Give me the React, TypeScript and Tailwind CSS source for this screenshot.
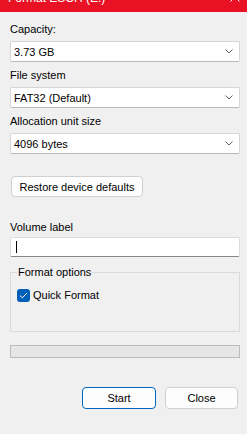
import React from "react";

const FONT = { fontFamily: '"Liberation Sans", Arial, sans-serif' };

function Chevron() {
  return (
    <svg width="8" height="5" viewBox="0 0 8 5" className="shrink-0">
      <path d="M0.5 0.5 L4 4 L7.5 0.5" fill="none" stroke="#5f5f5f" strokeWidth="1" />
    </svg>
  );
}

function Combo({ value }: { value: string }) {
  return (
    <div className="flex h-[21px] items-center justify-between rounded-[2px] border border-[#d6d6d6] border-b-[#b8b8b8] bg-white pl-[3px] pr-[6px]">
      <span className="leading-[14px]">{value}</span>
      <Chevron />
    </div>
  );
}

function Field({ label, value, gap }: { label: string; value: string; gap: string }) {
  return (
    <div className={gap}>
      <div className="leading-[14px]">{label}</div>
      <div className="mt-[5px]">
        <Combo value={value} />
      </div>
    </div>
  );
}

export default function App() {
  return (
    <div style={FONT} className="flex h-[434px] w-[247px] flex-col overflow-hidden bg-[#f0f0f0] text-[11px] text-black">
      <div className="flex h-[12px] shrink-0 justify-between overflow-hidden bg-[#e81224] pl-[8px] pr-[7px] text-white">
        <span className="mt-[-8px] text-[12px] leading-[12px]">Format ESCH (E:)</span>
        <svg width="10" height="10" viewBox="0 0 10 10" className="mt-[-8px]">
          <path d="M0.5 0.5 L9.5 9.5 M9.5 0.5 L0.5 9.5" stroke="#ffffff" strokeWidth="1" />
        </svg>
      </div>

      <div className="flex flex-1 flex-col pl-[10px] pr-[7px]">
        <Field label="Capacity:" value="3.73 GB" gap="mt-[10px]" />
        <Field label="File system" value="FAT32 (Default)" gap="mt-[6px]" />
        <Field label="Allocation unit size" value="4096 bytes" gap="mt-[6px]" />

        <button className="ml-[1px] mt-[22px] flex h-[21px] w-[132px] items-center justify-center rounded-[4px] border border-[#d0d0d0] bg-[#fdfdfd] leading-[14px]">
          Restore device defaults
        </button>

        <div className="mt-[23px] leading-[14px]">Volume label</div>
        <div className="mt-[3px] flex h-[20px] items-center rounded-[2px] border border-[#dcdcdc] border-b-[#868686] bg-white pl-[5px]">
          <span className="h-[12px] w-px bg-black" />
        </div>

        <fieldset className="mt-[8px] h-[67px] border border-[#dadada] px-[6px]">
          <legend className="px-[1px] leading-[14px]">Format options</legend>
          <label className="mt-[9px] flex items-center gap-[3px] leading-[14px]">
            <span className="flex h-[13px] w-[13px] items-center justify-center rounded-[3px] bg-[#005fb8]">
              <svg width="9" height="7" viewBox="0 0 9 7">
                <path d="M1 3.6 L3.3 5.8 L8 1" fill="none" stroke="#ffffff" strokeWidth="1" />
              </svg>
            </span>
            Quick Format
          </label>
        </fieldset>

        <div className="mt-[13px] h-[13px] border border-[#bcbcbc] bg-[#e6e6e6]" />

        <div className="mt-[29px] flex justify-end gap-[9px] pr-[2px]">
          <button className="flex h-[22px] w-[74px] items-center justify-center rounded-[4px] border border-[#0067c0] bg-[#fdfdfd] leading-[14px]">
            Start
          </button>
          <button className="flex h-[22px] w-[73px] items-center justify-center rounded-[4px] border border-[#d0d0d0] bg-[#fdfdfd] leading-[14px]">
            Close
          </button>
        </div>
      </div>
    </div>
  );
}
